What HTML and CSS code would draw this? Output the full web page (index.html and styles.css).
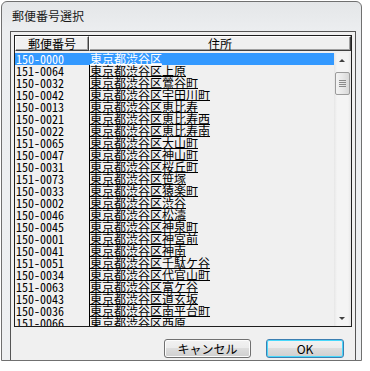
FILE: index.html
```html
<!DOCTYPE html>
<html lang="ja">
<head>
    <meta charset="UTF-8">
    <title>郵便番号選択</title>
    <link rel="stylesheet" href="styles.css">
</head>
<body>
    <div class="window">
        <div class="titlebar">郵便番号選択</div>
        <div class="client">
            <div class="listview">
                <div class="header">
                    <div class="col col-code">郵便番号</div>
                    <div class="col col-addr">住所</div>
                </div>
                <div class="body">
                    <div class="rows" id="rows"></div>
                    <div class="scrollbar">
                        <div class="arrow up"></div>
                        <div class="track">
                            <div class="thumb"><span></span><span></span><span></span><span></span></div>
                        </div>
                        <div class="arrow down"></div>
                    </div>
                </div>
            </div>
            <div class="buttons">
                <button class="btn btn-cancel">キャンセル</button>
                <button class="btn btn-ok">OK</button>
            </div>
        </div>
    </div>

    <script>
        const items = [
            ["150-0000", "東京都渋谷区"],
            ["151-0064", "東京都渋谷区上原"],
            ["150-0032", "東京都渋谷区鶯谷町"],
            ["150-0042", "東京都渋谷区宇田川町"],
            ["150-0013", "東京都渋谷区恵比寿"],
            ["150-0021", "東京都渋谷区恵比寿西"],
            ["150-0022", "東京都渋谷区恵比寿南"],
            ["151-0065", "東京都渋谷区大山町"],
            ["150-0047", "東京都渋谷区神山町"],
            ["150-0031", "東京都渋谷区桜丘町"],
            ["151-0073", "東京都渋谷区笹塚"],
            ["150-0033", "東京都渋谷区猿楽町"],
            ["150-0002", "東京都渋谷区渋谷"],
            ["150-0046", "東京都渋谷区松濤"],
            ["150-0045", "東京都渋谷区神泉町"],
            ["150-0001", "東京都渋谷区神宮前"],
            ["150-0041", "東京都渋谷区神南"],
            ["151-0051", "東京都渋谷区千駄ケ谷"],
            ["150-0034", "東京都渋谷区代官山町"],
            ["151-0063", "東京都渋谷区富ケ谷"],
            ["150-0043", "東京都渋谷区道玄坂"],
            ["150-0036", "東京都渋谷区南平台町"],
            ["151-0066", "東京都渋谷区西原"]
        ];

        const rows = document.getElementById("rows");
        items.forEach((item, i) => {
            const row = document.createElement("div");
            row.className = i === 0 ? "row selected" : "row";
            row.innerHTML = `<span class="code">${item[0]}</span><span class="addr"><u>${item[1]}</u></span>`;
            rows.appendChild(row);
        });
    </script>
</body>
</html>
```

FILE: styles.css
```css
body {
    margin: 0;
    background-color: #ffffff;
    font-family: "Noto Sans CJK JP", sans-serif;
    font-size: 12px;
}
.window {
    width: 361px;
    height: 360px;
    margin: 1px 0 0 1px;
    border: 1px solid #707070;
    border-radius: 6px 6px 0 0;
    background: linear-gradient(#e4e6e8, #eceef0 30px, #eef0f2);
    padding: 0 5px 0 8px;
    box-sizing: border-box;
    display: flex;
    flex-direction: column;
}
.titlebar {
    height: 29px;
    padding-left: 2px;
    line-height: 28px;
    color: #1a1a1a;
    font-size: 12px;
    flex-shrink: 0;
}
.client {
    flex: 1;
    border: 1px solid #555;
    border-bottom: none;
    background-color: #f0f0f0;
    padding: 3px 3px 0 3px;
}
.listview {
    height: 290px;
    border: 1px solid #1e1e1e;
    display: flex;
    flex-direction: column;
    overflow: hidden;
}
.header {
    display: flex;
    height: 15px;
    flex-shrink: 0;
}
.col {
    box-sizing: border-box;
    height: 15px;
    line-height: 13px;
    text-align: center;
    background-color: #f0f0f0;
    border: 1px solid;
    border-color: #ffffff #404040 #404040 #ffffff;
    box-shadow: inset -1px -1px 0 #a0a0a0;
    color: #000;
}
.col-code {
    width: 74px;
}
.col-addr {
    flex: 1;
}
.body {
    flex: 1;
    display: flex;
    padding-top: 2px;
    min-height: 0;
}
.rows {
    flex: 1;
    overflow: hidden;
}
.row {
    display: flex;
    height: 12px;
    line-height: 12px;
    color: #000;
    white-space: nowrap;
}
.row.selected {
    background-color: #3399ff;
    color: #fff;
}
.code {
    width: 73px;
    padding-left: 1px;
    font-family: "Noto Sans Mono CJK JP", "Liberation Mono", monospace;
    font-size: 12px;
}
.addr {
    border-left: 1px solid #000;
    padding-left: 0;
}
.row.selected .addr {
    border-left-color: #3399ff;
}
.addr u {
    text-decoration-thickness: 1px;
    text-underline-offset: 0px;
}
.scrollbar {
    width: 17px;
    display: flex;
    flex-direction: column;
    background: linear-gradient(to right, #e6e6e6, #f4f4f4 3px, #f4f4f4 14px, #e6e6e6);
}
.arrow {
    height: 17px;
    position: relative;
}
.arrow::after {
    content: "";
    position: absolute;
    left: 5px;
    border-left: 3px solid transparent;
    border-right: 3px solid transparent;
}
.arrow.up::after {
    top: 6px;
    border-bottom: 3px solid #404040;
}
.arrow.down::after {
    top: 8px;
    border-top: 3px solid #404040;
}
.track {
    flex: 1;
    padding-top: 2px;
}
.thumb {
    height: 21px;
    margin: 0 1px;
    border: 1px solid #9b9b9b;
    border-radius: 2px;
    background: linear-gradient(to right, #f3f3f3, #e8e8e8 50%, #d8d8d8);
    display: flex;
    flex-direction: column;
    align-items: center;
    justify-content: center;
    gap: 1px;
}
.thumb span {
    width: 7px;
    height: 1px;
    background-color: #8a8a8a;
}
.buttons {
    display: flex;
    justify-content: flex-end;
    gap: 15px;
    padding: 12px 8px 0 0;
}
.btn {
    height: 19px;
    padding: 0;
    font-family: "Noto Sans CJK JP", sans-serif;
    font-size: 12px;
    line-height: 15px;
    color: #000;
    border: 1px solid #707070;
    border-radius: 3px;
    background: linear-gradient(#f2f2f2, #ebebeb 50%, #dddddd 50%, #cfcfcf);
    box-shadow: inset 0 0 0 1px #fcfcfc;
}
.btn-cancel {
    width: 87px;
}
.btn-ok {
    width: 78px;
    border-color: #3c7fb1;
    box-shadow: inset 0 0 0 1px #48d8fb;
}
```
